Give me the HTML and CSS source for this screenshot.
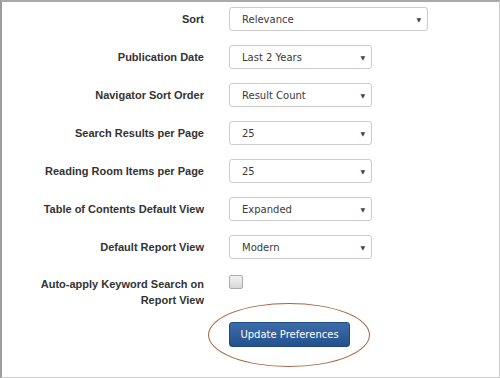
FILE: index.html
```html
<!DOCTYPE html>
<html lang="en">
<head>
    <meta charset="UTF-8">
    <title>Preferences</title>
    <link rel="stylesheet" href="styles.css">
</head>
<body>
    <div class="frame">
        <div class="prefs">
            <label class="pref-label">Sort</label>
            <div class="select wide"><span>Relevance</span><span class="arrow">&#9660;</span></div>

            <label class="pref-label">Publication Date</label>
            <div class="select"><span>Last 2 Years</span><span class="arrow">&#9660;</span></div>

            <label class="pref-label">Navigator Sort Order</label>
            <div class="select"><span>Result Count</span><span class="arrow">&#9660;</span></div>

            <label class="pref-label">Search Results per Page</label>
            <div class="select"><span>25</span><span class="arrow">&#9660;</span></div>

            <label class="pref-label">Reading Room Items per Page</label>
            <div class="select"><span>25</span><span class="arrow">&#9660;</span></div>

            <label class="pref-label">Table of Contents Default View</label>
            <div class="select"><span>Expanded</span><span class="arrow">&#9660;</span></div>

            <label class="pref-label">Default Report View</label>
            <div class="select"><span>Modern</span><span class="arrow">&#9660;</span></div>

            <label class="pref-label multi">Auto-apply Keyword Search on<br>Report View</label>
            <div class="check-cell"><span class="checkbox"></span></div>

            <div></div>
            <div class="button-wrap">
                <button class="button">Update Preferences</button>
                <!-- annotation ring around the button -->
                <span class="ring"></span>
            </div>
        </div>
    </div>
</body>
</html>
```

FILE: styles.css
```css
html, body {
    margin: 0;
    padding: 0;
    background-color: #fff;
}
.frame {
    width: 500px;
    height: 378px;
    box-sizing: border-box;
    border: 1px solid #cfcfcf;
    border-top: 2px solid #a9a9a9;
    border-left: 2px solid #9c9c9c;
    padding-top: 5px;
}
.prefs {
    display: grid;
    grid-template-columns: 202px auto;
    column-gap: 25px;
    row-gap: 14px;
    align-items: center;
}
.pref-label {
    font-family: "Liberation Sans", Arial, sans-serif;
    font-size: 11px;
    font-weight: bold;
    color: #333;
    text-align: right;
    line-height: 16px;
}
.pref-label.multi {
    align-self: start;
    padding-top: 3px;
}
.select {
    display: flex;
    justify-content: space-between;
    align-items: center;
    width: 143px;
    height: 24px;
    box-sizing: border-box;
    padding: 0 6px 0 12px;
    border: 1px solid #cdcdcd;
    border-radius: 3px;
    background-color: #fff;
    font-family: "DejaVu Sans", Verdana, sans-serif;
    font-size: 10px;
    color: #3a3a3a;
}
.select.wide {
    width: 199px;
}
.arrow {
    font-size: 6px;
    color: #444;
}
.check-cell {
    align-self: start;
    padding-top: 2px;
}
.checkbox {
    display: block;
    width: 14px;
    height: 14px;
    box-sizing: border-box;
    border: 1px solid #aaa;
    border-radius: 2px;
    background: linear-gradient(#f2f2f2, #d8d8d8);
}
.button-wrap {
    position: relative;
    width: 121px;
}
.button {
    display: block;
    width: 121px;
    height: 25px;
    padding: 0;
    border: 1px solid #1e4a84;
    border-radius: 3px;
    background: linear-gradient(#3d6cab, #24518e);
    color: #fff;
    font-family: "DejaVu Sans", Verdana, sans-serif;
    font-size: 10px;
    cursor: pointer;
}
.ring {
    position: absolute;
    left: -21px;
    top: -19px;
    width: 162px;
    height: 64px;
    box-sizing: border-box;
    border: 1.5px solid #a5663f;
    border-radius: 50%;
    pointer-events: none;
}
```
